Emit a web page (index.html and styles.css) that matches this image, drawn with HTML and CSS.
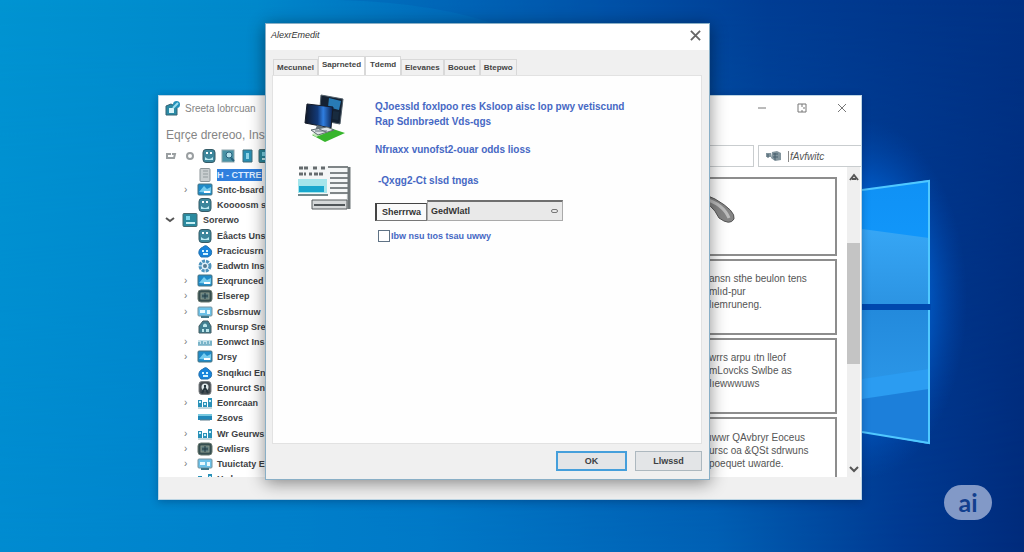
FILE: index.html
```html
<!DOCTYPE html>
<html lang="en">
<head>
<meta charset="utf-8">
<title>Desktop</title>
<link rel="stylesheet" href="styles.css">
</head>
<body>
<svg class="defs" aria-hidden="true">
  <defs>
    <symbol id="i-doc" viewBox="0 0 16 14"><rect x="3" y="0.500" width="10" height="13" rx="1" fill="#c9ced0" stroke="#8c9598"/><path d="M6 3h5M6 6h5M6 9h5" stroke="#929b9e"/></symbol>
    <symbol id="i-pc" viewBox="0 0 16 14"><rect x="1" y="1" width="14" height="11" rx="1" fill="#208bc8" stroke="#477381"/><path d="M2 9l5-6 3 3 4-2v6z" fill="#76ccef"/><path d="M7 9h6" stroke="#fff" stroke-width="2"/></symbol>
    <symbol id="i-server" viewBox="0 0 16 14"><rect x="1" y="0.500" width="14" height="13" rx="1" fill="#2b8a9f" stroke="#476a70"/><path d="M4 3h4v4H4z" fill="#7fd8ec"/><path d="M4 10h9" stroke="#c9f0f5" stroke-width="2"/></symbol>
    <symbol id="i-face" viewBox="0 0 16 14"><rect x="2" y="0.500" width="12" height="13" rx="3" fill="#3d879c" stroke="#355b67"/><path d="M5 4h2M9 4h2" stroke="#fff" stroke-width="2"/><path d="M4 8q4 4 8 0v3H4z" fill="#bdeaf2"/></symbol>
    <symbol id="i-gear" viewBox="0 0 16 14"><circle cx="8" cy="7" r="5" fill="#e0f0fa" stroke="#4d93bd" stroke-width="3" stroke-dasharray="3 1"/><circle cx="8" cy="7" r="2" fill="#567b91"/></symbol>
    <symbol id="i-blue" viewBox="0 0 16 14"><path d="M2 10Q1 5 6 3q3-3 6 1 4 2 2 7l-3 2H4z" fill="#1784dc" stroke="#2372af"/><path d="M5 7h2M9 7h2M6 10h5" stroke="#d5f4ff" stroke-width="2"/></symbol>
    <symbol id="i-dark" viewBox="0 0 16 14"><rect x="1" y="1" width="14" height="12" rx="3" fill="#354e50" stroke="#6b7970"/><rect x="4" y="4" width="8" height="6" fill="#57777a" stroke="#8b9a8c"/><path d="M5 7h6M8 4v6" stroke="#203b44"/></symbol>
    <symbol id="i-net" viewBox="0 0 16 14"><path d="M1 4h4v7H1zM6 6h4v5H6zM11 2h4v9h-4z" fill="#2a91b8"/><path d="M2 6h2M7 8h2M12 5h2" stroke="#c9f3ff" stroke-width="2"/><path d="M1 12h14" stroke="#81aebc"/></symbol>
    <symbol id="i-pale" viewBox="0 0 16 14"><rect x="1" y="2" width="14" height="9" rx="1" fill="#6cc1e8" stroke="#7794a0"/><path d="M3 5h5v3H3zM10 5h3v4h-3z" fill="#e9faff"/><path d="M4 12h8" stroke="#427789" stroke-width="2"/></symbol>
    <symbol id="i-lock" viewBox="0 0 16 14"><path d="M2 6l4-5h5l3 5v7H2z" fill="#417f91" stroke="#455e65"/><path d="M6 5q2-3 4 0v2H6zM5 9h2v3H5zM9 9h3v3H9z" fill="#bae5ea"/></symbol>
    <symbol id="i-mono" viewBox="0 0 16 14"><rect x="2" y="0.500" width="12" height="13" rx="3" fill="#454c51" stroke="#7a7f82"/><circle cx="8" cy="6" r="3.500" fill="#dde7e9"/><path d="M5 12l3-5 3 5M7 5h2" stroke="#26353c" stroke-width="2" fill="none"/></symbol>
    <symbol id="i-bar" viewBox="0 0 16 14"><path d="M1 3h14v6H1z" fill="#2188b8"/><path d="M1 3h14v2H1z" fill="#78c8df"/><path d="M3 9h10" stroke="#5c7c8b"/></symbol>
    <symbol id="i-dots" viewBox="0 0 16 14"><path d="M1 5h14v5H1z" fill="#c3e1ea"/><path d="M2 9V7M5 9V6M8 9V7M11 9V6M14 9V6M1 10h14" stroke="#3287a7" fill="none"/></symbol>
  </defs>
</svg>

<main class="desktop">
  <svg class="wallpaper" viewBox="0 0 1024 552" preserveAspectRatio="none" aria-hidden="true">
    <defs>
      <linearGradient id="sky" x1="0" y1="0" x2="1" y2="0"><stop offset="0" stop-color="#0094d2"/><stop offset="0.250" stop-color="#0088cb"/><stop offset="0.450" stop-color="#006aba"/><stop offset="0.600" stop-color="#0050a6"/><stop offset="0.750" stop-color="#003d94"/><stop offset="1" stop-color="#003184"/></linearGradient>
      <linearGradient id="low" x1="0" y1="0" x2="1" y2="0"><stop offset="0" stop-color="#008bd0"/><stop offset="0.420" stop-color="#0079c7"/><stop offset="0.700" stop-color="#0060b4"/><stop offset="0.880" stop-color="#003a92"/><stop offset="1" stop-color="#002b7b"/></linearGradient>
      <linearGradient id="fade" x1="0" y1="0" x2="0" y2="1"><stop offset="0" stop-color="#000"/><stop offset="1" stop-color="#fff"/></linearGradient>
      <mask id="lower"><rect width="1024" height="552" fill="url(#fade)"/></mask>
      <radialGradient id="glow"><stop offset="0" stop-color="#0a96ff"/><stop offset="0.500" stop-color="#0072ec" stop-opacity="0.800"/><stop offset="1" stop-color="#0050bb" stop-opacity="0"/></radialGradient>
      <linearGradient id="paneA" x1="0" y1="0" x2="0" y2="1"><stop offset="0" stop-color="#0f91f5"/><stop offset="1" stop-color="#149cff"/></linearGradient>
      <linearGradient id="paneB" x1="0" y1="0" x2="0" y2="1"><stop offset="0" stop-color="#36a6f5"/><stop offset="1" stop-color="#2c94e3"/></linearGradient>
      <linearGradient id="paneC" x1="0" y1="0" x2="0" y2="1"><stop offset="0" stop-color="#238adc"/><stop offset="1" stop-color="#319ff0"/></linearGradient>
    </defs>
    <rect width="1024" height="552" fill="url(#sky)"/>
    <rect width="1024" height="552" fill="url(#low)" mask="url(#lower)"/>
    <path d="M340 0Q440 3 500 26H620V0z" fill="#0055ac" opacity="0.250"/>
    <ellipse cx="862" cy="300" rx="105" ry="180" fill="url(#glow)"/>
    <path d="M862 190l67-10v124h-67z" fill="url(#paneA)"/>
    <path d="M862 229l67 9v66h-67z" fill="url(#paneB)"/>
    <path d="M862 310h67v134l-67-12z" fill="url(#paneC)"/>
    <path d="M862 379l67-10v20l-67 10z" fill="#2b9cf1"/>
    <path d="M862 399l67-10v55l-67-12z" fill="#1c7fda"/>
    <path d="M862 304h69v6h-69z" fill="#0048ae"/>
    <path d="M862 190l67-9v123M929 310v133l-67-11" fill="none" stroke="#50c8ff" stroke-width="2"/>
  </svg>

  <section class="window" aria-label="Sreeta Loborcuan">
    <header class="win-title">
      <svg class="app-icon" viewBox="0 0 16 16"><path d="M1 6l5-2 6 3v8H1z" fill="#2c8ba6" stroke="#356273"/><path d="M4 8h5v5H4z" fill="#dcf5fa"/><circle cx="11.500" cy="4.500" r="3.500" fill="#2391ba"/><path d="M8 8l5-5" stroke="#9fe0ef" stroke-width="2"/></svg>
      <h1 class="win-name">Sreeta lobrcuan</h1>
      <div class="win-controls">
        <button type="button" aria-label="Minimize"><svg viewBox="0 0 12 12"><path d="M2 6h8"/></svg></button>
        <button type="button" aria-label="Maximize"><svg viewBox="0 0 12 12"><path d="M2 2h8v8H2zM6 2v3M6 8v2M7 6h2"/></svg></button>
        <button type="button" aria-label="Close"><svg viewBox="0 0 12 12"><path d="M2 2l8 8M10 2l-8 8"/></svg></button>
      </div>
    </header>
    <nav class="menu">Eqrçe drereoo, Ins</nav>
    <div class="toolbar">
      <div class="tools">
        <button type="button" aria-label="Back"><svg viewBox="0 0 16 14"><path d="M8 5H4v4h4M9 5h3l-1 4H8" fill="none" stroke="#9a9fa1" stroke-width="2"/></svg></button>
        <button type="button" aria-label="Forward"><svg viewBox="0 0 16 14"><circle cx="8" cy="7" r="3" fill="none" stroke="#9a9fa1" stroke-width="2"/></svg></button>
        <button type="button" aria-label="Console"><svg><use href="#i-face"/></svg></button>
        <button type="button" aria-label="Search"><svg viewBox="0 0 16 14"><rect x="2" y="1" width="12" height="12" fill="#4992a5" stroke="#8da6ad"/><circle cx="9" cy="6" r="3" fill="#b6e2ec" stroke="#28637e"/><path d="M11 9l3 3" stroke="#28637e" stroke-width="2"/></svg></button>
        <button type="button" aria-label="Document"><svg viewBox="0 0 16 14"><path d="M4 1h9v12H4z" fill="#298eb2" stroke="#426d7b"/><path d="M7 4h3v6H7z" fill="#8fd4e8"/></svg></button>
        <button type="button" aria-label="Network"><svg><use href="#i-server"/></svg></button>
      </div>
      <div class="field-end"></div>
      <button type="button" class="action"><svg viewBox="0 0 16 12"><path d="M0 3h5v4H0zM6 2l5-1 4 2v7l-6 1-4-3z" fill="#82949d"/><path d="M2 4v4M7 4h5M7 7h5M9 3v7" stroke="#465f6d"/></svg><span>fAvfwitc</span></button>
    </div>
    <div class="win-body">
      <ul class="tree">
        <li><i></i><svg><use href="#i-doc"/></svg><span class="picked">H - CTTRE</span></li>
        <li><i>›</i><svg><use href="#i-pc"/></svg><span>Sntc-bsard</span></li>
        <li><i></i><svg><use href="#i-face"/></svg><span>Koooosm s</span></li>
        <li class="root"><i><svg viewBox="0 0 10 6"><path d="M1 1l4 3 4-3"/></svg></i><svg><use href="#i-server"/></svg><span>Sorerwo</span></li>
        <li><i></i><svg><use href="#i-face"/></svg><span>Eåacts Uns</span></li>
        <li><i></i><svg><use href="#i-blue"/></svg><span>Pracicusrn</span></li>
        <li><i></i><svg><use href="#i-gear"/></svg><span>Eadwtn Ins</span></li>
        <li><i>›</i><svg><use href="#i-pc"/></svg><span>Exqrunced</span></li>
        <li><i>›</i><svg><use href="#i-dark"/></svg><span>Elserep</span></li>
        <li><i>›</i><svg><use href="#i-pale"/></svg><span>Csbsrnuw</span></li>
        <li><i></i><svg><use href="#i-lock"/></svg><span>Rnursp Sre</span></li>
        <li><i>›</i><svg><use href="#i-dots"/></svg><span>Eonwct Ins</span></li>
        <li><i>›</i><svg><use href="#i-pc"/></svg><span>Drsy</span></li>
        <li><i></i><svg><use href="#i-blue"/></svg><span>Snqıkıcı Ens</span></li>
        <li><i></i><svg><use href="#i-mono"/></svg><span>Eonurct Sn</span></li>
        <li><i>›</i><svg><use href="#i-net"/></svg><span>Eonrcaan</span></li>
        <li><i></i><svg><use href="#i-bar"/></svg><span>Zsovs</span></li>
        <li><i>›</i><svg><use href="#i-net"/></svg><span>Wr Geurws</span></li>
        <li><i>›</i><svg><use href="#i-dark"/></svg><span>Gwlisrs</span></li>
        <li><i>›</i><svg><use href="#i-pale"/></svg><span>Tuuictaty E</span></li>
        <li><i></i><svg><use href="#i-net"/></svg><span>Hwlc</span></li>
      </ul>
      <div class="cards">
        <article class="card"><svg class="swoosh" viewBox="0 0 80 50"><path d="M0 14Q34 4 54 16 75 28 73 36 69 43 58 35 51 20 36 16 20 18 0 20z" fill="#858585" stroke="#555"/><path d="M44 16q18 5 24 19" stroke="#bdbdbd" stroke-width="3" fill="none"/></svg></article>
        <article class="card"><p>ansn sthe beulon tens<br>mlıd-pur<br>lıemruneng.</p></article>
        <article class="card"><p>wrrs arpu ıtn lleof<br>mLovcks Swlbe as<br>Iıewwwuws</p></article>
        <article class="card"><p>ıwwr QAvbryr Eoceus<br>ursc oa &amp;QSt sdrwuns<br>poequet uwarde.</p></article>
      </div>
      <div class="scroll" aria-hidden="true">
        <svg viewBox="0 0 10 8"><path d="M1 7l4-5 4 5M3 6h4" /></svg>
        <div class="track"><div class="thumb"></div></div>
        <svg viewBox="0 0 10 8"><path d="M1 2l4 4 4-4"/></svg>
      </div>
    </div>
    <footer class="status"></footer>
  </section>

  <section class="dialog" role="dialog" aria-label="Alexr Emedit">
    <header class="dlg-title">
      <h2>AlexrEmedit</h2>
      <button type="button" aria-label="Close"><svg viewBox="0 0 12 12"><path d="M1 1l10 10M11 1L1 11"/></svg></button>
    </header>
    <div class="dlg-body">
      <div class="tabs" role="tablist">
        <button type="button" role="tab" class="first">Mecunnel</button>
        <button type="button" role="tab" class="on wide">Saprneted</button>
        <button type="button" role="tab" class="on">Tdemd</button>
        <button type="button" role="tab">Elevanes</button>
        <button type="button" role="tab">Boouet</button>
        <button type="button" role="tab">Btepwo</button>
      </div>
      <div class="page">
        <div class="pictures">
          <svg class="computers" viewBox="0 0 44 48">
            <defs><linearGradient id="screen"><stop offset="0" stop-color="#111827"/><stop offset="0.450" stop-color="#123978"/><stop offset="0.650" stop-color="#2f7ee0"/><stop offset="1" stop-color="#0a1e49"/></linearGradient></defs>
            <path d="M10 41l18-7 15 5-20 9z" fill="#37b52d"/><path d="M10 40l18-6 3 2-17 7z" fill="#c3e8b9"/>
            <path d="M19 1l22 4-3 25-21-4z" fill="#142233" stroke="#53606a"/><path d="M27 4l12 3-2 9-11-3z" fill="#287bb5"/><path d="M25 16l12 2-1 8-11-2z" fill="#182b3f"/>
            <path d="M5 10l26 3-2 21-26-5z" fill="url(#screen)" stroke="#141b28"/>
            <path d="M15 31l7 2-2 5-7-1z" fill="#65727a"/><path d="M9 36l16-3 7 3-16 5z" fill="#dbe1e3" stroke="#5f6b70"/><path d="M13 37h12M17 35l7 3" stroke="#66727a"/>
          </svg>
          <svg class="forms" viewBox="0 0 54 46">
            <path d="M3 1h50v43h-4V30H3z" fill="#f4f6f6"/><path d="M31 2h20M33 8h18M33 13h18M33 18h18M33 23h18M33 28h18" stroke="#7f8587" stroke-width="2"/>
            <path d="M52 2v42" stroke="#6f7678" stroke-width="3"/>
            <path d="M2 3h9M16 3h5M24 3h5M2 9h7M12 9h3M17 9h9" stroke="#666c6f" stroke-width="3" stroke-dasharray="4 1"/>
            <path d="M1 14h29v14H1z" fill="#a4e5eb"/><path d="M2 21h25v6H2z" fill="#18a7cd"/><path d="M1 30h30" stroke="#72888c" stroke-width="2"/>
            <path d="M15 35h35v9H15z" fill="#d5d8d9" stroke="#575c5f"/><path d="M17 40h31" stroke="#505659" stroke-width="2"/>
          </svg>
        </div>
        <form class="form">
          <p class="lead">QJoeзsld foxlpoo res Ksloop aisc lop pwy vetiscund<br>Rap Sdınbrəedt Vds-qgs</p>
          <p class="line">Nfrıaxx vunofst2-ouar odds lioss</p>
          <p class="line sub">-Qxgg2-Ct slsd tngas</p>
          <div class="pick">
            <button type="button" class="key">Sherrrwa</button>
            <div class="combo"><select aria-label="Sherrrwa"><option>GedWlatl</option></select><span class="grip"></span></div>
          </div>
          <label class="check"><input type="checkbox"><span>Ibw nsu tıos tsau uwwy</span></label>
        </form>
      </div>
      <footer class="dlg-foot">
        <button type="button" class="main">OK</button>
        <button type="button">Llwssd</button>
      </footer>
    </div>
  </section>

  <div class="badge">ai</div>
</main>
</body>
</html>
```
FILE: styles.css
```css
* { box-sizing: border-box; }
body { margin: 0; font-family: "Liberation Sans", Arial, sans-serif; font-size: 10px; color: #3d4144; }
button { font: inherit; color: inherit; border: 0; background: none; padding: 0; }
h1, h2, p, ul { margin: 0; padding: 0; }
svg { display: block; flex: none; }
.defs { position: absolute; width: 0; height: 0; }
.desktop { position: relative; min-height: 100vh; overflow: hidden; background: #0077c5; }
.wallpaper { position: absolute; inset: 0; width: 100%; height: 100%; }

.window { position: absolute; left: 158px; top: 95px; width: 704px; height: 405px; display: flex; flex-direction: column; background: #fff; border: 1px solid #bcd5e4; box-shadow: 0 2px 8px rgba(0, 20, 60, .3); }
.win-title { display: flex; align-items: center; gap: 4px; height: 24px; padding: 0 13px 0 6px; }
.app-icon { width: 16px; height: 16px; }
.win-name { font-size: 10px; font-weight: 400; color: #858585; white-space: nowrap; }
.win-controls { display: flex; gap: 28px; margin-left: auto; }
.win-controls svg { width: 12px; height: 12px; fill: none; stroke: #777; }
.menu { height: 25px; padding: 8px 7px 0; font-size: 12px; line-height: 14px; color: #858585; white-space: nowrap; }
.toolbar { display: flex; height: 22px; }
.tools { display: flex; flex: none; align-items: center; gap: 3px; width: 114px; padding-left: 4px; }
.tools svg { width: 16px; height: 14px; }
.field-end { flex: 1; border: 1px solid #c9cdcf; margin-right: 4px; }
.action { display: flex; align-items: center; gap: 6px; width: 103px; padding-left: 7px; border: 1px solid #c9cdcf; border-right: 0; font-style: italic; color: #555; }
.action svg { width: 16px; height: 12px; }
.action span { border-left: 1px solid #888; padding-left: 1px; }

.win-body { flex: 1; min-height: 0; display: flex; overflow: hidden; }
.tree { list-style: none; width: 114px; height: 320px; flex: none; display: flex; flex-direction: column; font-size: 9px; font-weight: 700; }
.tree li { flex: 1; display: flex; align-items: center; gap: 4px; padding-left: 25px; white-space: nowrap; }
.tree li > svg { width: 16px; height: 14px; }
.tree i { flex: none; width: 9px; font-style: normal; font-size: 10px; font-weight: 400; color: #777; line-height: 12px; }
.tree .root { padding-left: 6px; gap: 5px; }
.tree .root i { width: 12px; }
.tree i svg { width: 10px; height: 6px; fill: none; stroke: #555; stroke-width: 2; }
.picked { background: #2f7fde; color: #dcecff; line-height: 12px; }
.cards { flex: 1; padding: 10px 10px 0 0; display: flex; flex-direction: column; gap: 3px; }
.card { flex: none; height: 76px; border: 2px solid #8d8d8d; padding: 11px 4px 0 434px; color: #555; }
.card:first-child { height: 79px; padding: 4px 0 0 386px; }
.card:last-child { padding-top: 12px; }
.card p { line-height: 13px; white-space: nowrap; }
.swoosh { width: 80px; height: 50px; }
.scroll { width: 13px; margin-right: 1px; background: #efefef; display: flex; flex-direction: column; align-items: center; padding: 6px 0 4px; }
.scroll svg { width: 10px; height: 8px; fill: none; stroke: #555; stroke-width: 2; }
.track { flex: 1; align-self: stretch; padding-top: 62px; }
.thumb { height: 121px; background: #c4c4c4; }
.status { height: 22px; background: #f0f0f0; }

.dialog { position: absolute; left: 265px; top: 23px; width: 445px; height: 457px; display: flex; flex-direction: column; background: #fff; border: 1px solid #89afc6; box-shadow: 0 3px 16px rgba(0, 0, 0, .45); }
.dlg-title { display: flex; align-items: center; justify-content: space-between; height: 26px; padding: 0 8px 4px 5px; }
.dlg-title h2 { font-size: 9px; font-weight: 400; font-style: italic; color: #333; }
.dlg-title svg { width: 11px; height: 11px; fill: none; stroke: #666; stroke-width: 2; }
.dlg-body { flex: 1; min-height: 0; display: flex; flex-direction: column; background: #f0f0f0; padding: 6px 7px 8px 6px; }
.tabs { display: flex; align-items: flex-end; height: 19px; padding-left: 1px; }
.tabs button { height: 16px; min-width: 36px; padding: 0 3px; border: 1px solid #d9d9d9; border-bottom: 0; font-size: 8px; font-weight: 700; color: #444; }
.tabs .on { height: 19px; background: #fff; padding-bottom: 4px; }
.tabs .wide { min-width: 46px; }
.page { flex: 1; display: flex; gap: 24px; background: #fefefe; border: 1px solid #e2e2e2; padding: 18px 24px; }
.pictures { display: flex; flex-direction: column; align-items: center; gap: 23px; width: 54px; flex: none; }
.computers { width: 44px; height: 48px; }
.forms { width: 54px; height: 46px; }
.form { flex: 1; padding-top: 5px; color: #4668c4; font-weight: 700; white-space: nowrap; }
.lead { line-height: 15px; }
.line { margin-top: 14px; line-height: 14px; }
.sub { margin-top: 17px; padding-left: 3px; }
.pick { display: flex; align-items: flex-end; margin-top: 12px; }
.key { width: 52px; height: 18px; border: 1px solid #777; border-left: 2px solid #444; border-top-color: #444; background: #fafafa; font-size: 9px; font-weight: 700; color: #333; }
.combo { position: relative; width: 136px; }
.combo select { display: block; width: 100%; height: 21px; padding: 0 3px; appearance: none; border: 1px solid #aaa; border-top: 2px solid #6f6f6f; border-radius: 0; background: #e9e9e9; font: 700 9px "Liberation Sans", Arial, sans-serif; color: #333; }
.grip { position: absolute; right: 5px; top: 9px; width: 7px; height: 4px; border: 1px solid #777; border-radius: 2px; pointer-events: none; }
.check { display: flex; align-items: center; gap: 1px; margin-top: 9px; padding-left: 3px; font-size: 9px; }
.check input { appearance: none; width: 12px; height: 12px; margin: 0; border: 1px solid #5f7285; background: #fff; }
.dlg-foot { display: flex; justify-content: flex-end; gap: 8px; padding-top: 7px; }
.dlg-foot button { width: 67px; height: 20px; border: 1px solid #adb8bf; background: #e3e5e7; font-weight: 700; font-size: 9px; }
.dlg-foot .main { width: 71px; border: 2px solid #459fdb; }

.badge { position: absolute; right: 32px; bottom: 32px; width: 48px; height: 35px; border-radius: 18px; background: #8299c7; color: #123f8e; font: 700 25px/34px Lato, sans-serif; text-align: center; }
```
